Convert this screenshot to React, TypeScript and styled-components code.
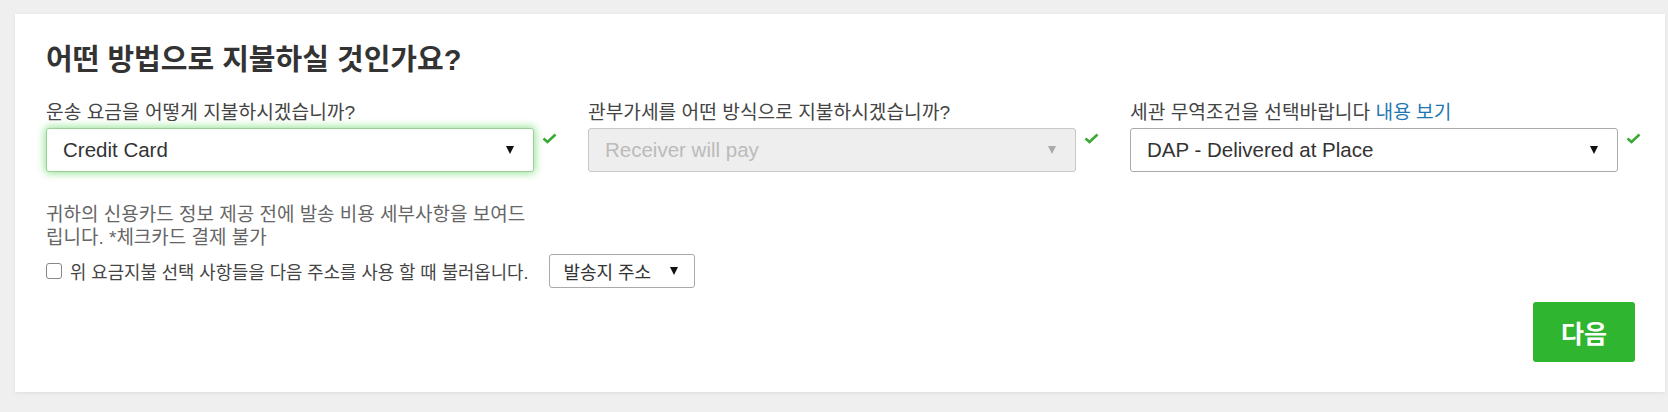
import * as React from "react";
import styled, { createGlobalStyle, css } from "styled-components";

const GlobalStyle = createGlobalStyle`
  html, body {
    margin: 0;
    padding: 0;
    background: #efefef;
  }
  body {
    font-family: "Liberation Sans", "Noto Sans CJK KR", sans-serif;
    color: #333;
  }
  * {
    box-sizing: border-box;
  }
`;

const Page = styled.div`
  padding: 14px 3px 20px 15px;
`;

const Card = styled.section`
  background: #fff;
  box-shadow: 0 1px 3px rgba(0, 0, 0, 0.08);
  padding: 29px 30px 30px 31px;
`;

const Title = styled.h1`
  margin: 0 0 25px 0;
  font-size: 29px;
  line-height: 34px;
  font-weight: bold;
  color: #333;
`;

const FieldRow = styled.div`
  display: grid;
  grid-template-columns: repeat(3, 488px);
  column-gap: 54px;
`;

const Field = styled.div`
  display: flex;
  flex-direction: column;
`;

const Label = styled.label`
  font-size: 19.2px;
  line-height: 22px;
  color: #444;
  margin-bottom: 4px;
  white-space: nowrap;
`;

const Link = styled.a`
  color: #1f78b4;
  text-decoration: none;
  cursor: pointer;
`;

const SelectWrap = styled.div`
  position: relative;
`;

const SelectBox = styled.div<{ variant: "focused" | "disabled" | "normal" }>`
  height: 44px;
  display: flex;
  align-items: center;
  justify-content: space-between;
  padding: 0 19px 0 16px;
  border: 1px solid #aaa;
  border-radius: 3px;
  background: #fff;
  font-size: 20.5px;
  color: #333;

  ${props => {
    switch (props.variant) {
      case "focused":
        return css`
          border-color: #9ccf9c;
          box-shadow: 0 0 8px 1px rgba(80, 210, 80, 0.65);
        `;
      case "disabled":
        return css`
          background: #eee;
          border-color: #c8c8c8;
          color: #bbb;
        `;
      default:
        return null;
    }
  }}
`;

const Caret = styled.span<{ muted?: boolean }>`
  width: 0;
  height: 0;
  border-left: 4px solid transparent;
  border-right: 4px solid transparent;
  border-top: 8px solid ${props => (props.muted ? "#aaa" : "#111")};
`;

const CheckMark = styled.svg`
  position: absolute;
  left: calc(100% + 8px);
  top: 5px;
  width: 15px;
  height: 11px;
`;

const HelpText = styled.p`
  width: 490px;
  margin: 31px 0 5px 0;
  font-size: 19px;
  line-height: 23px;
  color: #666;
`;

const OptionRow = styled.div`
  display: flex;
  align-items: center;
`;

const CheckLabel = styled.label`
  display: flex;
  align-items: center;
  gap: 8px;
  font-size: 17.8px;
  color: #444;
  white-space: nowrap;
`;

const CheckBox = styled.span`
  width: 16px;
  height: 16px;
  border: 1px solid #888;
  border-radius: 3px;
  background: #fff;
`;

const AddressButton = styled.button`
  margin-left: 21px;
  height: 34px;
  width: 146px;
  display: flex;
  align-items: center;
  justify-content: space-between;
  padding: 0 16px 0 13px;
  border: 1px solid #aaa;
  border-radius: 3px;
  background: #fff;
  font: inherit;
  font-size: 18px;
  color: #333;
`;

const Footer = styled.div`
  display: flex;
  justify-content: flex-end;
  margin-top: 14px;
`;

const NextButton = styled.button`
  width: 102px;
  height: 60px;
  border: 0;
  border-radius: 3px;
  background: #2fb52f;
  color: #fff;
  font: inherit;
  font-size: 25px;
  font-weight: bold;
`;

function Check() {
  return (
    <CheckMark viewBox="0 0 15 11">
      <polyline
        points="1.5,5.5 5.5,9 13.5,1.5"
        fill="none"
        stroke="#3aa935"
        strokeWidth="2.6"
      />
    </CheckMark>
  );
}

interface SelectProps {
  value: string;
  variant: "focused" | "disabled" | "normal";
}

function Select(props: SelectProps) {
  return (
    <SelectWrap>
      <SelectBox variant={props.variant}>
        <span>{props.value}</span>
        <Caret muted={props.variant === "disabled"} />
      </SelectBox>
      <Check />
    </SelectWrap>
  );
}

export default function App() {
  return (
    <Page>
      <GlobalStyle />
      <Card>
        <Title>어떤 방법으로 지불하실 것인가요?</Title>
        <FieldRow>
          <Field>
            <Label>운송 요금을 어떻게 지불하시겠습니까?</Label>
            <Select value="Credit Card" variant="focused" />
          </Field>
          <Field>
            <Label>관부가세를 어떤 방식으로 지불하시겠습니까?</Label>
            <Select value="Receiver will pay" variant="disabled" />
          </Field>
          <Field>
            <Label>
              세관 무역조건을 선택바랍니다 <Link>내용 보기</Link>
            </Label>
            <Select value="DAP - Delivered at Place" variant="normal" />
          </Field>
        </FieldRow>
        <HelpText>
          귀하의 신용카드 정보 제공 전에 발송 비용 세부사항을 보여드립니다.
          *체크카드 결제 불가
        </HelpText>
        <OptionRow>
          <CheckLabel>
            <CheckBox />
            위 요금지불 선택 사항들을 다음 주소를 사용 할 때 불러옵니다.
          </CheckLabel>
          <AddressButton>
            발송지 주소
            <Caret />
          </AddressButton>
        </OptionRow>
        <Footer>
          <NextButton>다음</NextButton>
        </Footer>
      </Card>
    </Page>
  );
}
